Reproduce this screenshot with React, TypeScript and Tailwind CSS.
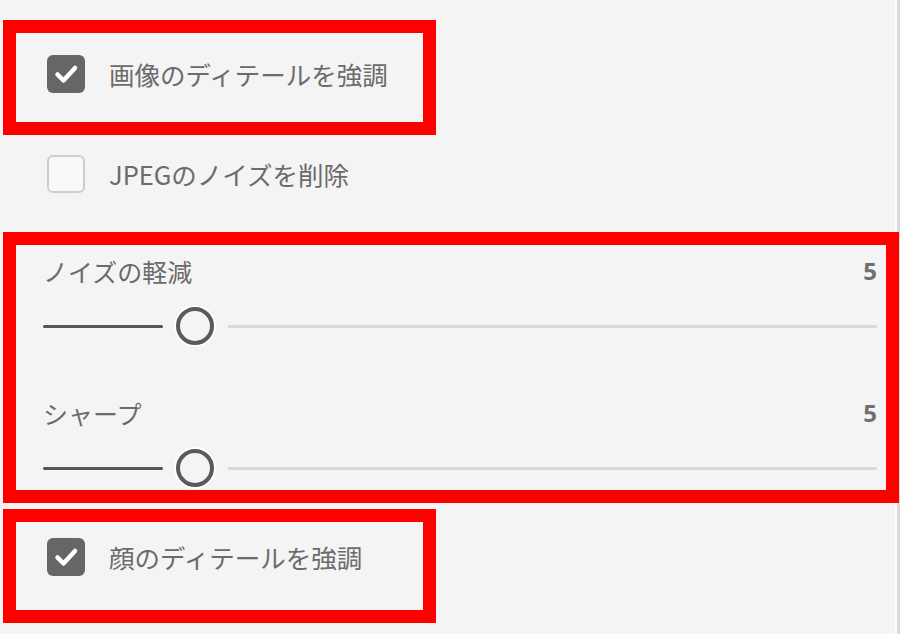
import React from "react";

const font = { fontFamily: '"Noto Sans CJK JP", "Noto Sans", sans-serif' };

function CheckBox({ checked }: { checked: boolean }) {
  if (checked) {
    return (
      <div className="w-[38px] h-[38px] rounded-[6px] bg-[#666666] flex items-center justify-center shrink-0">
        <svg width="38" height="38" viewBox="0 0 38 38">
          <path d="M10.5 19.5 L16.5 25.5 L28 13" fill="none" stroke="#ffffff" strokeWidth="4.5" strokeLinecap="round" strokeLinejoin="round" />
        </svg>
      </div>
    );
  }
  return <div className="w-[38px] h-[38px] rounded-[6px] border-2 border-[#cdcdcd] bg-[#f9f9f9] shrink-0" />;
}

function CheckRow({ checked, label }: { checked: boolean; label: string }) {
  return (
    <div className="flex items-center gap-[24px] h-[38px]">
      <CheckBox checked={checked} />
      <span className="text-[25.5px] leading-[38px] text-[#6b6b6b] whitespace-nowrap" style={font}>
        {label}
      </span>
    </div>
  );
}

function Slider({ label, value }: { label: string; value: string }) {
  return (
    <div className="flex flex-col">
      <div className="flex items-center justify-between h-[30px]">
        <span className="text-[25px] leading-[30px] text-[#6b6b6b] whitespace-nowrap" style={font}>
          {label}
        </span>
        <span
          className="text-[24px] leading-[30px] font-bold text-[#707070]"
          style={{ fontFamily: '"Open Sans", "Noto Sans", sans-serif' }}
        >
          {value}
        </span>
      </div>
      <div className="flex items-center h-[38px] mt-[21px]">
        <div className="w-[120px] h-[3px] bg-[#555555] rounded-full" />
        <div className="ml-[13px] w-[38px] h-[38px] rounded-full border-[4px] border-[#5a5a5a] bg-[#f4f4f4] shadow-[0_0_0_2px_#ffffff] shrink-0" />
        <div className="ml-[14px] flex-1 h-[3px] bg-[#d8d8d8] rounded-full" />
      </div>
    </div>
  );
}

export default function App() {
  return (
    <div className="w-[900px] h-[634px] bg-[#f4f4f4] overflow-hidden flex flex-col pt-[20px] shadow-[inset_-3px_0_0_#dadada,inset_-5px_0_0_#ffffff]">
      <div className="ml-[3px] w-[433px] h-[115px] border-[13px] border-[#ff0000] pl-[31px] pt-[22px]">
        <CheckRow checked label="画像のディテールを強調" />
      </div>
      <div className="mt-[20px] pl-[47px]">
        <CheckRow checked={false} label="JPEGのノイズを削除" />
      </div>
      <div className="mt-[39px] ml-[3px] w-[896px] h-[271px] border-[13px] border-[#ff0000] pl-[27px] pr-[9px] pt-[11px] flex flex-col">
        <Slider label="ノイズの軽減" value="5" />
        <div className="mt-[53px]">
          <Slider label="シャープ" value="5" />
        </div>
      </div>
      <div className="mt-[6px] ml-[3px] w-[433px] h-[114px] border-[13px] border-[#ff0000] pl-[31px] pt-[16px]">
        <CheckRow checked label="顔のディテールを強調" />
      </div>
    </div>
  );
}
